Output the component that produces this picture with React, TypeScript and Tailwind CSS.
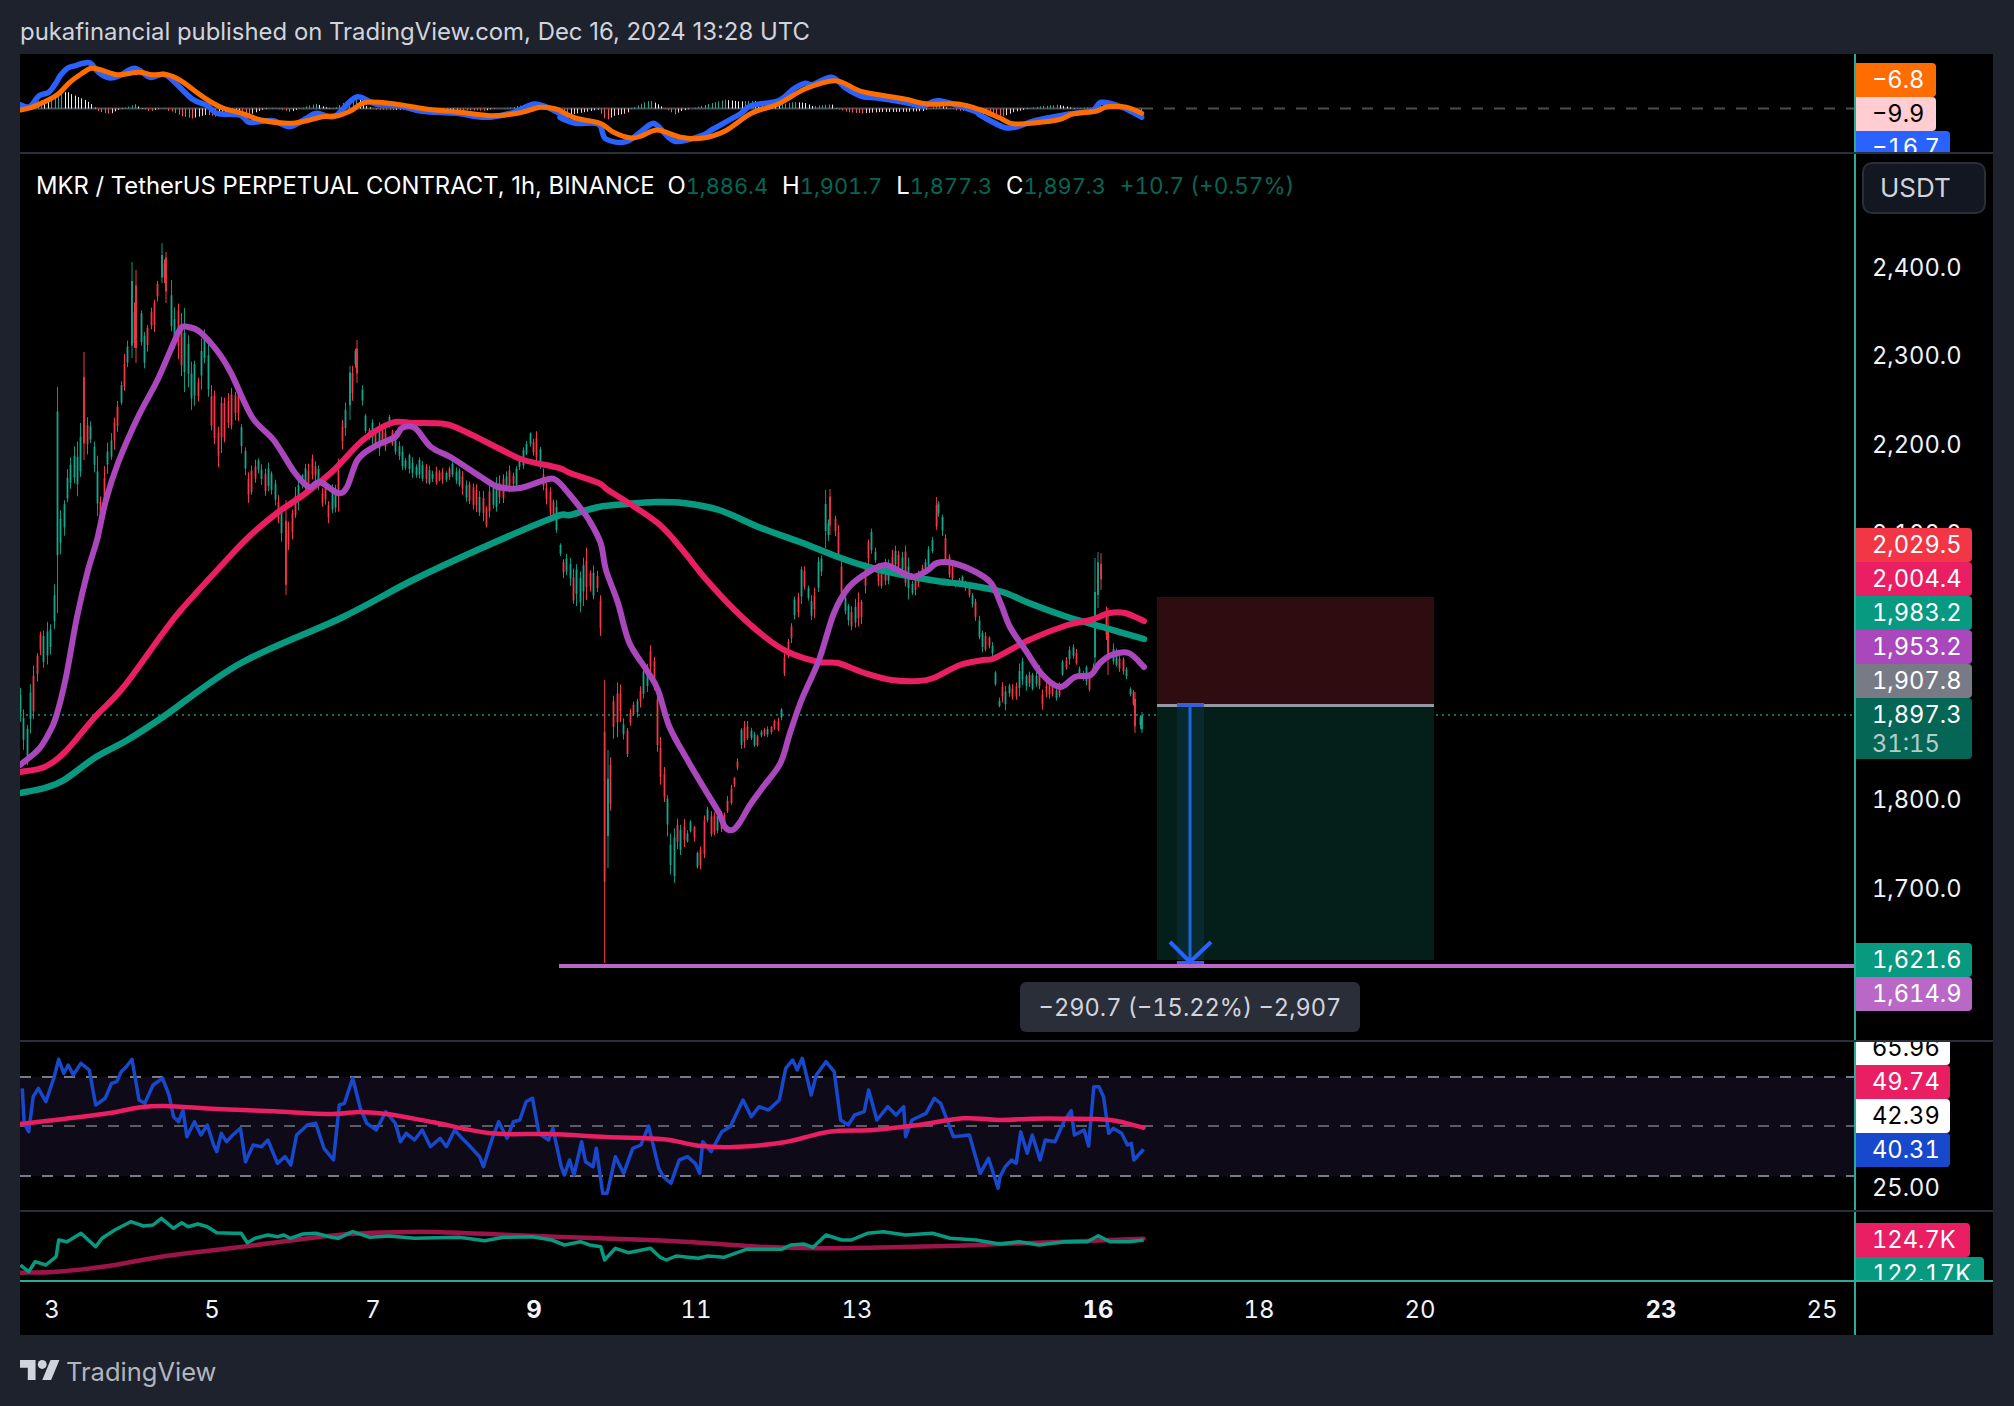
import React from "react";

type P = [number, number];
const sx = (pts: number[], ox: number, fx: number, oy: number, fy: number): P[] => {
  const out: P[] = [];
  for (let i = 0; i < pts.length; i += 2) out.push([ox + pts[i] / fx, oy + pts[i + 1] / fy]);
  return out;
};
const poly = (p: P[]) => "M" + p.map((q) => `${q[0].toFixed(1)} ${q[1].toFixed(1)}`).join("L");
const smooth = (p: P[]) => {
  let d = `M${p[0][0].toFixed(1)} ${p[0][1].toFixed(1)}`;
  for (let i = 0; i < p.length - 1; i++) {
    const a = p[Math.max(0, i - 1)], b = p[i], c = p[i + 1], e = p[Math.min(p.length - 1, i + 2)];
    const c1x = b[0] + (c[0] - a[0]) / 6, c1y = b[1] + (c[1] - a[1]) / 6;
    const c2x = c[0] - (e[0] - b[0]) / 6, c2y = c[1] - (e[1] - b[1]) / 6;
    d += `C${c1x.toFixed(1)} ${c1y.toFixed(1)} ${c2x.toFixed(1)} ${c2y.toFixed(1)} ${c[0].toFixed(1)} ${c[1].toFixed(1)}`;
  }
  return d;
};
const interp = (p: P[], x: number) => {
  if (x <= p[0][0]) return p[0][1];
  for (let i = 0; i < p.length - 1; i++) {
    if (x <= p[i + 1][0]) {
      const t = (x - p[i][0]) / (p[i + 1][0] - p[i][0] || 1);
      return p[i][1] + t * (p[i + 1][1] - p[i][1]);
    }
  }
  return p[p.length - 1][1];
};

/* ---------- main pane ---------- */
const purple: P[] = [[20,765],[38,750],[48,735],[56,717],[66,677],[77,617],[88,570],[97,540],[106,500],[118,463],[138,417],[157.5,380],[173.6,343],[181,328],[188,327],[200,332],[218,352],[231,373],[252,417],[273.6,440],[295,473],[309,487],[320,482],[338,493],[347,487],[357.5,460],[373.6,447],[395,437],[402,428],[415,428],[431,447],[452,458],[481,477],[498.6,487],[520,488],[545,480],[556,480],[570,495],[579.6,507],[589,520],[600.6,543],[606,570],[618,603],[629,642],[646.5,670],[658,690],[669.5,727],[688.6,762],[704,788],[719,813],[725,827],[732.6,830],[740,822],[750,805],[763,787],[780.5,763],[790,733],[801.5,700],[819,660],[834,613],[849,587],[868.5,572],[885.7,565],[903,573],[914,577],[928,570],[937,563],[952.7,563],[975.7,572],[991,583],[1000.5,603],[1010,627],[1025.4,650],[1042.6,675],[1060,687],[1075,677],[1090.5,675],[1100,663],[1111.5,655],[1128.7,653],[1144,667]];
const pink: P[] = [[20,772],[44.6,767],[64,753],[95,717],[123.6,687],[163,633],[181,610],[220,567],[248.6,537],[277,513],[306,493],[334,470],[363,440],[391.4,423],[413,423],[445,424],[466,432],[502,450],[523.6,460],[559,468],[570,473],[598.7,483],[608,490],[627,502],[660,525],[685,553],[704,577],[734.6,610],[765,637],[788,652],[819,662],[838,663],[864.7,673],[891.5,680],[918,681],[933.6,678],[960,665],[983,660],[995,658],[1029,640],[1067.5,625],[1090.5,620],[1109.6,613],[1125,613],[1144,621]];
const teal: P[] = [[20,793],[44.6,788],[64,780],[96,757],[127.5,740],[163,717],[241,663],[341,618],[413,580],[484,547],[555,517],[570,515],[598.7,507],[627,504],[656,502],[683,503],[719,510],[761,528],[800,542],[838,557],[868.5,567],[903,575],[937,581],[968,585],[1002.5,592],[1029,603],[1067.5,617],[1105.7,628],[1144,639]];

const env: [number, number, number][] = [[20,687,770],[27,683,780],[34,657,717],[38,632,675],[45,630,675],[52,580,650],[57.5,500,613],[64.6,472,525],[72,433,507],[78,430,500],[84,400,460],[91,415,463],[98.6,463,555],[106,445,503],[114.6,407,450],[120,380,420],[125,332,390],[132,300,358],[136,270,363],[145,337,377],[156,280,327],[162,243,283],[166,252,303],[173.6,292,373],[180.7,292,378],[186,312,420],[195,360,410],[205.7,317,393],[216,390,477],[223.6,377,445],[238,388,428],[243,400,473],[246,458,513],[256,448,480],[263,455,500],[270,457,490],[276,485,528],[286,500,560],[293,487,545],[300,472,503],[313,450,487],[323.6,480,515],[334,483,533],[340,428,505],[343,402,443],[350,366,420],[357,340,383],[360,370,410],[366,417,437],[380.7,420,463],[390,412,440],[398.6,433,468],[407.5,450,477],[431,465,488],[452,458,482],[468,470,507],[484,492,532],[498.6,467,508],[518,455,487],[530.7,430,450],[535,422,462],[538,432,480],[547,477,512],[557.5,503,543],[561,555,573],[570,553,600],[575,555,613],[581.5,542,613],[585,533,600],[597,572,600],[602,583,700],[605,680,760],[608,750,868],[615,675,747],[621.7,687,743],[625,737,785],[631,700,730],[639,685,713],[648.5,643,693],[652,647,670],[656,662,733],[659,712,803],[663,750,793],[665.7,767,842],[669,813,880],[675,818,887],[685,815,850],[692.5,820,838],[699,845,882],[702,810,885],[706,802,827],[711.6,813,847],[717,810,840],[722,798,833],[730.7,783,807],[736.5,768,778],[740,727,760],[746,710,747],[753,732,757],[761,728,743],[773,718,738],[780.5,715,733],[783,667,725],[786,630,680],[789,617,650],[793,575,640],[796,598,635],[802,558,605],[805,568,592],[811,590,635],[815.7,562,623],[820.7,547,590],[825.6,490,548],[830,489,535],[836,510,540],[840,540,617],[843.6,582,617],[850,605,633],[859.7,587,638],[866.6,542,580],[870,517,550],[876,547,577],[880,567,598],[887.6,553,587],[895,545,577],[903,543,582],[907,522,605],[910,573,610],[916,568,595],[924,557,577],[933.6,523,557],[936.6,497,530],[940,500,532],[944,527,565],[949,552,580],[954.6,573,588],[964,575,593],[970,582,605],[977,602,630],[981,625,657],[987,627,650],[991,633,653],[994,640,690],[997.5,688,705],[1004,680,717],[1010,680,702],[1017,677,710],[1021,647,695],[1027,662,692],[1039,663,692],[1041.5,683,717],[1048,680,702],[1058,677,703],[1062,660,683],[1067.5,652,668],[1071,635,663],[1074,637,670],[1081,663,680],[1085,663,687],[1090,673,698],[1095,640,673],[1098,600,660],[1101,590,640],[1105,583,627],[1108,630,675],[1115,648,673],[1121,650,673],[1125,660,685],[1130.6,685,703],[1135,692,733],[1138,715,733],[1142,712,733]];
const special: [number, number, number, boolean][] = [[57.5,387,613,true],[84,352,460,false],[132,262,358,true],[136,270,363,false],[162,243,283,true],[166,252,303,false],[286,500,595,false],[350,366,420,true],[357,340,383,false],[604.6,680,963,false],[608,750,868,true],[825.6,490,548,true],[830,489,535,false],[936.6,497,530,false],[1095,558,673,true],[1098,552,608,true],[1101,553,590,false],[1108,608,675,false],[1135,692,733,false],[1142,712,733,true]];

let seed = 12345;
const rnd = () => {
  seed = (seed * 1664525 + 1013904223) % 4294967296;
  return seed / 4294967296;
};
const candles = (() => {
  let gw = "", rw = "", gb = "", rb = "";
  const add = (x: number, hi: number, lo: number, up: boolean) => {
    const bt = hi + (lo - hi) * (0.08 + rnd() * 0.22);
    const bb = lo - (lo - hi) * (0.08 + rnd() * 0.22);
    const w = `M${x.toFixed(1)} ${hi.toFixed(1)}V${lo.toFixed(1)}`;
    const b = `M${x.toFixed(1)} ${bt.toFixed(1)}V${bb.toFixed(1)}`;
    if (up) { gw += w; gb += b; } else { rw += w; rb += b; }
  };
  const et = env.map((e) => [e[0], e[1]] as P);
  const eb = env.map((e) => [e[0], e[2]] as P);
  for (let x = 20; x < 1143; x += 3.352) {
    if (special.some((s) => Math.abs(s[0] - x) < 1.7)) continue;
    const t = interp(et, x), b = interp(eb, x), r = b - t;
    const len = r * (0.4 + rnd() * 0.45);
    const hi = t + rnd() * (r - len);
    add(Math.round(x) + 0.5, hi, hi + len, rnd() > 0.5);
  }
  special.forEach((s) => add(s[0], s[1], s[2], s[3]));
  return { gw, rw, gb, rb };
})();

/* ---------- MACD pane ---------- */
const macdBlue: P[] = [
  ...sx([0,152,25,158,50,125,75,115,95,85,105,65,125,42,145,35,165,28,185,28,205,55,235,72,260,65,300,43,340,70,375,60,400,80,450,135,490,155,515,178,575,183,600,205,660,200,705,218,745,195,775,178,820,188,860,145,885,128,930,150,990,155,1050,172,1140,178,1215,190,1290,175,1345,150,1400,172,1430,200], 20, 2.613, 54, 3),
  ...sx([0,190,40,208,100,210,120,255,175,262,235,212,255,215,300,262,370,245,400,225,470,180,500,155,570,140,610,105,640,88,660,92,710,70,750,105,790,128,830,132,900,145,950,155,990,140,1080,170,1100,185,1160,220,1195,218,1240,200,1320,182,1390,170,1415,145,1470,160,1520,190], 560, 2.613, 54, 3),
];
const macdOrange: P[] = [
  ...sx([0,168,30,160,70,140,100,120,130,85,160,60,185,43,210,47,255,62,310,55,345,62,385,62,420,80,480,130,530,162,580,178,630,198,700,208,750,200,790,188,830,185,865,170,905,145,980,150,1060,165,1150,175,1230,185,1300,178,1360,160,1400,165], 20, 2.613, 54, 3),
  ...sx([0,170,40,192,105,208,140,235,185,252,215,245,255,228,315,250,370,253,430,232,500,178,570,150,640,105,720,80,790,113,900,135,960,150,1040,150,1100,168,1150,192,1190,210,1300,198,1340,180,1400,172,1430,158,1480,160,1520,178], 560, 2.613, 54, 3),
];
const hist = (() => {
  const groups: Record<string, string> = { g: "", w: "", p: "", r: "" };
  let prev = 0;
  for (let x = 21; x < 1142; x += 3.352) {
    const v = (interp(macdOrange, x) - interp(macdBlue, x)) * 1.0;
    const rising = v > prev;
    const key = v >= 0 ? (rising ? "g" : "w") : rising ? "p" : "r";
    groups[key] += `M${Math.round(x) + 0.5} 108.5V${(108.5 - v).toFixed(1)}`;
    prev = v;
  }
  return groups;
})();

/* ---------- RSI + volume ---------- */
const rsi: P[] = [
  ...sx([35,205,38,310,45,335,52,230,60,205,72,245,85,170,92,118,100,160,107,135,115,165,127,130,140,150,150,255,165,235,175,190,183,185,190,155,198,140,207,118,218,240,227,250,240,195,255,175,265,225,272,290,280,305,287,270,293,350,305,305,315,345,325,315,335,375,340,395,347,340,355,365,365,345,377,325,385,425,397,375,410,380,420,360,435,430,447,410,456,435,465,345,482,315,495,310,508,385,523,420,532,255,540,250,553,175,565,265,575,310,590,330,605,275,620,310,628,365,637,340,650,360,662,330,675,380,690,355,700,380,713,330,722,350,735,375,752,410,758,440,772,355,782,305,795,355,805,305,815,300,825,245,835,235,845,340,860,360,867,325,880,440,885,465,893,420,900,465,912,365,918,425,930,440,935,385,945,520,952,520,965,410,978,460,992,385,1005,375,1017,318,1033,445,1040,470,1052,490,1065,420,1078,410,1090,430,1097,460,1102,365,1115,395,1132,335,1145,320,1165,240,1178,290,1190,260,1205,270,1222,240,1232,145,1243,120,1250,150,1258,115,1272,225,1280,165,1295,125,1308,155,1318,300,1330,315,1340,285,1355,275,1362,210,1375,300,1392,260,1405,285,1417,260,1420,350,1430,300,1452,280,1465,235,1475,250,1495,350,1520,345,1537,460,1550,415,1565,505], 0, 1.568, 1020, 3),
  ...sx([0,470,8,440,18,420,25,430,32,335,42,400,50,345,62,420,70,360,85,365,100,300,110,272,115,345,130,330,137,378,145,200,153,200,160,230,168,340,175,325,188,340,197,375,203,370,207,420,222,388], 1000, 1.546, 1020, 3),
];
const rsiMa: P[] = [
  ...sx([32,312,100,297,170,280,220,262,260,258,340,267,430,274,520,282,565,276,610,283,680,307,770,340,860,342,950,351,1040,358,1095,377,1150,381,1230,367,1300,335,1370,330,1440,315,1510,295], 0, 1.568, 1020, 3),
  ...sx([0,300,50,296,100,296,170,300,222,323], 1000, 1.546, 1020, 3),
];
const vol: P[] = [
  ...sx([32,735,45,755,55,725,72,735,88,710,92,660,105,665,127,640,150,680,160,655,180,630,205,605,225,618,240,615,253,595,272,625,285,608,295,620,310,612,325,620,340,638,365,640,378,640,388,668,400,655,420,645,435,650,445,645,455,655,475,642,495,640,520,652,530,655,553,635,580,652,610,648,650,655,720,652,760,662,790,652,835,650,865,660,885,675,910,665,925,675,942,680,948,720,965,685,985,698,1020,685,1035,712,1045,720,1060,708,1095,715,1110,708,1135,712,1170,688,1225,688,1240,675,1260,672,1275,682,1295,645,1320,660,1335,660,1360,640,1385,635,1420,645,1462,640,1490,655,1530,660], 0, 1.568, 1020, 3),
  ...sx([0,672,30,665,60,675,100,665,135,665,152,647,170,665,200,665,222,660], 1000, 1.546, 1020, 3),
];
const volMa: P[] = [
  ...sx([32,758,90,755,170,738,260,708,380,680,530,645,620,637,680,636,800,645,940,655,1060,664,1190,680,1280,685,1400,682,1500,677], 0, 1.568, 1020, 3),
  ...sx([0,672,100,665,222,656], 1000, 1.546, 1020, 3),
];

const font = "font-['Inter','Liberation_Sans',sans-serif]";

function Tag({ bg, fg = "text-white", h = "h-[34px]", w, children }: { bg: string; fg?: string; h?: string; w: string; children: React.ReactNode }) {
  return (
    <div className={`${bg} ${fg} ${h} ${w} flex flex-col justify-center rounded-r-[4px] pl-[16px] text-[23.7px] leading-[34px] tabular-nums overflow-hidden`}>
      {children}
    </div>
  );
}

const Sep = () => <div className="h-[2px] w-full bg-[#2a2e39]" />;

function AxisText({ top, children }: { top: string; children: React.ReactNode }) {
  return <div className={`absolute left-[16px] ${top} h-[34px] leading-[34px] text-[23.7px] tabular-nums text-[#f0f3fa]`}>{children}</div>;
}

export default function App() {
  return (
    <div className={`flex h-[1406px] w-[2014px] flex-col overflow-hidden bg-[#1e222d] ${font}`}>
      <header className="flex h-[54px] items-center pt-[10px] pl-[20px] text-[23.9px] text-[#d1d4dc]">
        pukafinancial published on TradingView.com, Dec 16, 2024 13:28 UTC
      </header>

      <main className="ml-[20px] flex w-[1973px] flex-col bg-black">
        {/* MACD */}
        <div className="flex h-[98px]">
          <svg width="1834" height="98" viewBox="20 54 1834 98" className="block">
            <path d="M1142 108.5H1855" stroke="#4a4c54" strokeWidth="2" strokeDasharray="11 11" fill="none" />
            <path d="M20 108.5H1142" stroke="#4a4c54" strokeWidth="2" fill="none" />
            <path d={hist.g} stroke="#26a69a" strokeWidth="1" />
            <path d={hist.w} stroke="#e8f0ee" strokeWidth="1" />
            <path d={hist.p} stroke="#ffcdd2" strokeWidth="1" />
            <path d={hist.r} stroke="#ff5252" strokeWidth="1" />
            <path d={smooth(macdBlue)} stroke="#2962ff" strokeWidth="5.5" fill="none" strokeLinecap="round" strokeLinejoin="round" />
            <path d={smooth(macdOrange)} stroke="#ff6d00" strokeWidth="5" fill="none" strokeLinecap="round" strokeLinejoin="round" />
          </svg>
          <div className="relative w-[139px] overflow-hidden border-l-2 border-[#2bab96]">
            <div className="absolute left-0 top-[9px] flex flex-col">
              <Tag bg="bg-[#ff6d00]" w="w-[80px]">−6.8</Tag>
              <Tag bg="bg-[#ffcdd2]" fg="text-black" w="w-[80px]">−9.9</Tag>
              <Tag bg="bg-[#2962ff]" w="w-[94px]">−16.7</Tag>
            </div>
          </div>
        </div>
        <Sep />

        {/* main */}
        <div className="relative flex h-[886px]">
          <div className="relative w-[1834px]">
            <svg width="1834" height="886" viewBox="20 154 1834 886" className="block">
              <path d="M20 715H1855" stroke="#089981" strokeWidth="1.5" strokeDasharray="2 4" fill="none" />
              <rect x="1157" y="597" width="277" height="108" fill="#2f0c10" />
              <rect x="1157" y="707" width="277" height="253" fill="#041f1a" />
              <rect x="1177" y="707" width="27" height="253" fill="#082a2e" />
              <path d={candles.gw} stroke="#089981" strokeWidth="1" />
              <path d={candles.rw} stroke="#f23645" strokeWidth="1" />
              <path d={candles.gb} stroke="#12a78f" strokeWidth="1.8" />
              <path d={candles.rb} stroke="#f23645" strokeWidth="1.8" />
              <path d={smooth(teal)} stroke="#089981" strokeWidth="6.5" fill="none" strokeLinecap="round" />
              <path d={smooth(pink)} stroke="#e91e63" strokeWidth="6" fill="none" strokeLinecap="round" />
              <path d={smooth(purple)} stroke="#ab47bc" strokeWidth="6" fill="none" strokeLinecap="round" />
              <rect x="1157" y="704" width="277" height="3" fill="#9598a1" />
              <path d="M559 966H1855" stroke="#ba68c8" strokeWidth="4" />
              <rect x="1177" y="703" width="27" height="4" fill="#3a5ed6" />
              <path d="M1190 706V960" stroke="#1e66dc" strokeWidth="3" />
              <path d="M1170 942L1190 962L1211 942" stroke="#2962ff" strokeWidth="4" fill="none" />
              <rect x="1177" y="961" width="27" height="3" fill="#2962ff" />
            </svg>
            <div className="absolute left-[16px] top-[15px] flex h-[34px] items-center whitespace-pre text-[23.8px] text-white">
              <span>MKR / TetherUS PERPETUAL CONTRACT, 1h, BINANCE</span>
              <span className="ml-[13px]">O</span>
              <span className="text-[21.8px] tabular-nums text-[#056656]">1,886.4</span>
              <span className="ml-[14px]">H</span>
              <span className="text-[21.8px] tabular-nums text-[#056656]">1,901.7</span>
              <span className="ml-[14px]">L</span>
              <span className="text-[21.8px] tabular-nums text-[#056656]">1,877.3</span>
              <span className="ml-[14px]">C</span>
              <span className="text-[21.8px] tabular-nums text-[#056656]">1,897.3</span>
              <span className="ml-[14px] text-[22.5px] tabular-nums text-[#056656]">+10.7 (+0.57%)</span>
            </div>
            <div className="absolute left-[1000px] top-[828px] flex h-[50px] w-[340px] items-center justify-center rounded-[6px] bg-[#2a2e39] pt-[2px] text-[23.6px] tabular-nums text-[#d1d4dc]">
              −290.7 (−15.22%) −2,907
            </div>
          </div>
          <div className="relative w-[139px] overflow-hidden border-l-2 border-[#2bab96]">
            <div className="absolute left-[6px] top-[8px] flex h-[52px] w-[124px] items-center rounded-[10px] border-2 border-[#2a2e39] bg-[#131722] pb-[2px] pl-[16px] text-[26px] text-[#d1d4dc]">
              USDT
            </div>
            <AxisText top="top-[97px]">2,400.0</AxisText>
            <AxisText top="top-[185px]">2,300.0</AxisText>
            <AxisText top="top-[274px]">2,200.0</AxisText>
            <AxisText top="top-[363px]">2,100.0</AxisText>
            <AxisText top="top-[629px]">1,800.0</AxisText>
            <AxisText top="top-[718px]">1,700.0</AxisText>
            <div className="absolute left-0 top-[374px] flex flex-col">
              <Tag bg="bg-[#f23645]" w="w-[116px]">2,029.5</Tag>
              <Tag bg="bg-[#e91e63]" w="w-[116px]">2,004.4</Tag>
              <Tag bg="bg-[#089981]" w="w-[116px]">1,983.2</Tag>
              <Tag bg="bg-[#ab47bc]" w="w-[116px]">1,953.2</Tag>
              <Tag bg="bg-[#787b86]" w="w-[116px]">1,907.8</Tag>
              <Tag bg="bg-[#056656]" h="h-[61px]" w="w-[116px]">
                <span className="block leading-[30px]">1,897.3</span>
                <span className="block leading-[28px] text-[#b6cdc7]">31:15</span>
              </Tag>
            </div>
            <div className="absolute left-0 top-[789px] flex flex-col">
              <Tag bg="bg-[#089981]" w="w-[116px]">1,621.6</Tag>
              <Tag bg="bg-[#ba68c8]" w="w-[116px]">1,614.9</Tag>
            </div>
          </div>
        </div>
        <Sep />

        {/* RSI */}
        <div className="flex h-[168px]">
          <svg width="1834" height="168" viewBox="20 1042 1834 168" className="block">
            <rect x="20" y="1077" width="1835" height="99" fill="#0e0a18" />
            <path d="M20 1077H1855M20 1176H1855" stroke="#787b86" strokeWidth="2" strokeDasharray="11 11" fill="none" />
            <path d="M20 1126H1855" stroke="#5a5c66" strokeWidth="2" strokeDasharray="11 11" fill="none" />
            <path d={poly(rsi)} stroke="#1848cc" strokeWidth="3.5" fill="none" strokeLinejoin="round" />
            <path d={smooth(rsiMa)} stroke="#e91e63" strokeWidth="4.5" fill="none" strokeLinecap="round" />
          </svg>
          <div className="relative w-[139px] overflow-hidden border-l-2 border-[#2bab96]">
            <div className="absolute left-0 top-[-11px] flex flex-col">
              <Tag bg="bg-white" fg="text-black" w="w-[94px]">65.96</Tag>
              <Tag bg="bg-[#e91e63]" w="w-[94px]">49.74</Tag>
              <Tag bg="bg-white" fg="text-black" w="w-[94px]">42.39</Tag>
              <Tag bg="bg-[#1848cc]" w="w-[94px]">40.31</Tag>
            </div>
            <AxisText top="top-[129px]">25.00</AxisText>
          </div>
        </div>
        <Sep />

        {/* volume */}
        <div className="flex h-[68px]">
          <svg width="1834" height="68" viewBox="20 1212 1834 68" className="block">
            <path d={smooth(volMa)} stroke="#9c1548" strokeWidth="4.5" fill="none" strokeLinecap="round" />
            <path d={poly(vol)} stroke="#089981" strokeWidth="3.5" fill="none" strokeLinejoin="round" />
          </svg>
          <div className="relative w-[139px] overflow-hidden border-l-2 border-[#2bab96]">
            <div className="absolute left-0 top-[11px] flex flex-col">
              <Tag bg="bg-[#e91e63]" w="w-[114px]">124.7K</Tag>
              <Tag bg="bg-[#089981]" w="w-[128px]">122.17K</Tag>
            </div>
          </div>
        </div>
        <div className="h-[2px] w-full bg-[#2bab96]" />

        {/* time axis */}
        <div className="flex h-[53px]">
          <div className="relative w-[1834px] text-[24px] leading-[55px] tabular-nums text-[#f0f3fa]">
            <span className="absolute left-[32px] -translate-x-1/2">3</span>
            <span className="absolute left-[192px] -translate-x-1/2">5</span>
            <span className="absolute left-[353px] -translate-x-1/2">7</span>
            <span className="absolute left-[514px] -translate-x-1/2 font-bold">9</span>
            <span className="absolute left-[676px] -translate-x-1/2">11</span>
            <span className="absolute left-[837px] -translate-x-1/2">13</span>
            <span className="absolute left-[1078px] -translate-x-1/2 font-bold">16</span>
            <span className="absolute left-[1239px] -translate-x-1/2">18</span>
            <span className="absolute left-[1400px] -translate-x-1/2">20</span>
            <span className="absolute left-[1641px] -translate-x-1/2 font-bold">23</span>
            <span className="absolute left-[1802px] -translate-x-1/2">25</span>
          </div>
          <div className="w-[139px] border-l-2 border-[#2bab96]" />
        </div>
      </main>

      <footer className="flex flex-1 items-start gap-[6px] pl-[20px] pt-[22px] text-[#b2b5be]">
        <svg width="40" height="20" viewBox="0 4 36 18" className="mt-[3px] block" fill="#d1d4dc" preserveAspectRatio="none">
          <path d="M14 22H7V11H0V4h14v18zM28 22h-8l7.5-18h8L28 22z" />
          <circle cx="20" cy="8" r="4" />
        </svg>
        <span className="text-[25.5px] leading-[30px]">TradingView</span>
      </footer>
    </div>
  );
}
